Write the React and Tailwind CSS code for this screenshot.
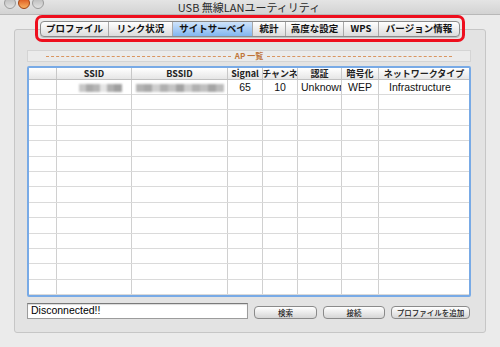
import React from "react";

const JP = { fontFamily: '"Noto Sans CJK JP", "Liberation Sans", sans-serif' };
const LS = { fontFamily: '"Liberation Sans", "Noto Sans CJK JP", sans-serif' };

const tabs = [
  { label: "プロファイル", w: "w-[68px]" },
  { label: "リンク状況", w: "w-[64px]" },
  { label: "サイトサーベイ", w: "w-[80px]", active: true },
  { label: "統計", w: "w-[33px]" },
  { label: "高度な設定", w: "w-[58px]" },
  { label: "WPS", w: "w-[35px]" },
  { label: "バージョン情報", w: "w-[80px]", last: true },
];

const cols = "grid grid-cols-[28px_75px_96px_35px_35px_44px_37px_1fr]";

function Blur({ w, shades }) {
  return (
    <div className="flex items-center justify-center h-full">
      <div className="flex blur-[1px]" style={{ width: w }}>
        {shades.map((s, i) => (
          <div key={i} className="h-[8px] flex-1" style={{ background: s }} />
        ))}
      </div>
    </div>
  );
}

export default function App() {
  const headers = ["", "SSID", "BSSID", "Signal", "チャンネ", "認証", "暗号化", "ネットワークタイプ"];
  const emptyRows = Array.from({ length: 14 });
  return (
    <div className="w-[500px] h-[347px] bg-[#ebebeb] overflow-hidden flex flex-col" style={LS}>
      {/* title bar */}
      <div className="h-[15px] bg-gradient-to-b from-[#e4e4e4] to-[#d3d3d3] border-b border-[#b8b8b8] flex items-start relative">
        <div className="flex gap-[2px] pl-[4px] -mt-[3px]">
          <div className="w-[12px] h-[12px] rounded-full bg-gradient-to-b from-[#b9b9b9] to-[#e2e2e2] border border-[#9a9a9a]" />
          <div className="w-[12px] h-[12px] rounded-full bg-gradient-to-b from-[#d84a10] to-[#f8b060] border border-[#a04010]" />
          <div className="w-[12px] h-[12px] rounded-full bg-gradient-to-b from-[#b9b9b9] to-[#e2e2e2] border border-[#9a9a9a]" />
        </div>
        <div className="flex-1 text-center text-[11px] leading-[14px] text-[#2a2a2a] -ml-[46px]" style={JP}>
          USB 無線LANユーティリティ
        </div>
      </div>

      {/* tabs */}
      <div className="h-[27px] pl-[35px] flex relative z-10">
        <div className="border-[3px] border-[#ee0f1e] rounded-[7px] px-[2px] py-[2px] flex items-center bg-transparent">
          <div className="flex h-[16px] rounded-[4px] border border-[#8a8a8a] overflow-hidden bg-gradient-to-b from-[#ffffff] to-[#dcdcdc] shadow-[0_1px_0_rgba(0,0,0,0.15)]">
            {tabs.map((t) => (
              <div
                key={t.label}
                className={
                  t.w +
                  " flex items-center justify-center text-[9.5px] font-bold text-[#111] leading-none " +
                  (t.last ? "" : "border-r border-[#a8a8a8] ") +
                  (t.active ? "bg-gradient-to-b from-[#cfe4fb] to-[#82b6ef]" : "")
                }
                style={JP}
              >
                {t.label}
              </div>
            ))}
          </div>
        </div>
      </div>

      {/* panel */}
      <div className="mx-[14px] -mt-[13px] h-[304px] border border-[#c6c6c6] rounded-[3px] bg-[#e3e3e3] pt-[20px] pl-[12px] pr-[14px] flex flex-col">
        {/* AP list label */}
        <div className="h-[12px] border border-[#d4d4d4] bg-[#ebebeb] flex items-center px-[18px] gap-[4px]">
          <div className="flex-1 border-t border-dashed border-[#d99560]" />
          <div className="text-[8px] font-bold text-[#c0763a] leading-none" style={JP}>AP 一覧</div>
          <div className="flex-1 border-t border-dashed border-[#d99560]" />
        </div>

        {/* table */}
        <div className="mt-[4px] h-[231px] border-2 border-[#78aae6] rounded-[2px] bg-white overflow-hidden">
          <div className={cols + " h-[12px] bg-gradient-to-b from-[#ffffff] to-[#e6e6e6] border-b border-[#c0c0c0]"}>
            {headers.map((h, i) => (
              <div
                key={i}
                className={"flex items-center justify-center text-[9px] font-bold text-[#222] leading-none overflow-hidden whitespace-nowrap " + (i < 7 ? "border-r border-[#c8c8c8]" : "")}
                style={JP}
              >
                {h}
              </div>
            ))}
          </div>
          <div className={cols + " h-[15px] border-b border-[#dadada] text-[10.5px] text-[#111]"}>
            <div className="border-r border-[#d0d0d0]" />
            <div className="border-r border-[#d0d0d0] pl-[12px]">
              <Blur w="43px" shades={["#c8c8c8", "#a9a9a9", "#b5b5b5", "#e6e6e6", "#b0b0b0", "#9f9f9f"]} />
            </div>
            <div className="border-r border-[#d0d0d0]">
              <Blur w="88px" shades={["#b3b3b3", "#a8a8a8", "#cfcfcf", "#b0b0b0", "#c4c4c4", "#a2a2a2", "#cdcdcd", "#b2b2b2", "#c0c0c0", "#a5a5a5", "#bcbcbc"]} />
            </div>
            <div className="border-r border-[#d0d0d0] flex items-center justify-center">65</div>
            <div className="border-r border-[#d0d0d0] flex items-center justify-center">10</div>
            <div className="border-r border-[#d0d0d0] flex items-center pl-[3px] overflow-hidden whitespace-nowrap">Unknown</div>
            <div className="border-r border-[#d0d0d0] flex items-center justify-center">WEP</div>
            <div className="flex items-center justify-center pr-[8px]">Infrastructure</div>
          </div>
          {emptyRows.map((_, r) => (
            <div key={r} className={cols + " h-[15.4px] border-b border-[#dadada]"}>
              {Array.from({ length: 8 }).map((__, i) => (
                <div key={i} className={i < 7 ? "border-r border-[#d0d0d0]" : ""} />
              ))}
            </div>
          ))}
        </div>

        {/* bottom controls */}
        <div className="mt-[6px] flex items-end">
          <div className="w-[221px] h-[16px] bg-white border border-[#9c9c9c] border-t-[#7a7a7a] shadow-[inset_0_1px_1px_rgba(0,0,0,0.15)] flex items-center pl-[3px] text-[10.5px] text-black">
            Disconnected!!
          </div>
          <div className="ml-[6px] w-[63px] h-[13px] rounded-[4px] border border-[#8a8a8a] bg-gradient-to-b from-[#ffffff] to-[#d6d6d6] flex items-center justify-center text-[7.5px] font-medium text-[#222] leading-none" style={JP}>
            検索
          </div>
          <div className="ml-[6px] w-[62px] h-[13px] rounded-[4px] border border-[#8a8a8a] bg-gradient-to-b from-[#ffffff] to-[#d6d6d6] flex items-center justify-center text-[7.5px] font-medium text-[#222] leading-none" style={JP}>
            接続
          </div>
          <div className="ml-[6px] w-[79px] h-[13px] rounded-[4px] border border-[#8a8a8a] bg-gradient-to-b from-[#ffffff] to-[#d6d6d6] flex items-center justify-center text-[7.5px] font-medium text-[#222] leading-none" style={JP}>
            プロファイルを追加
          </div>
        </div>
      </div>
    </div>
  );
}
